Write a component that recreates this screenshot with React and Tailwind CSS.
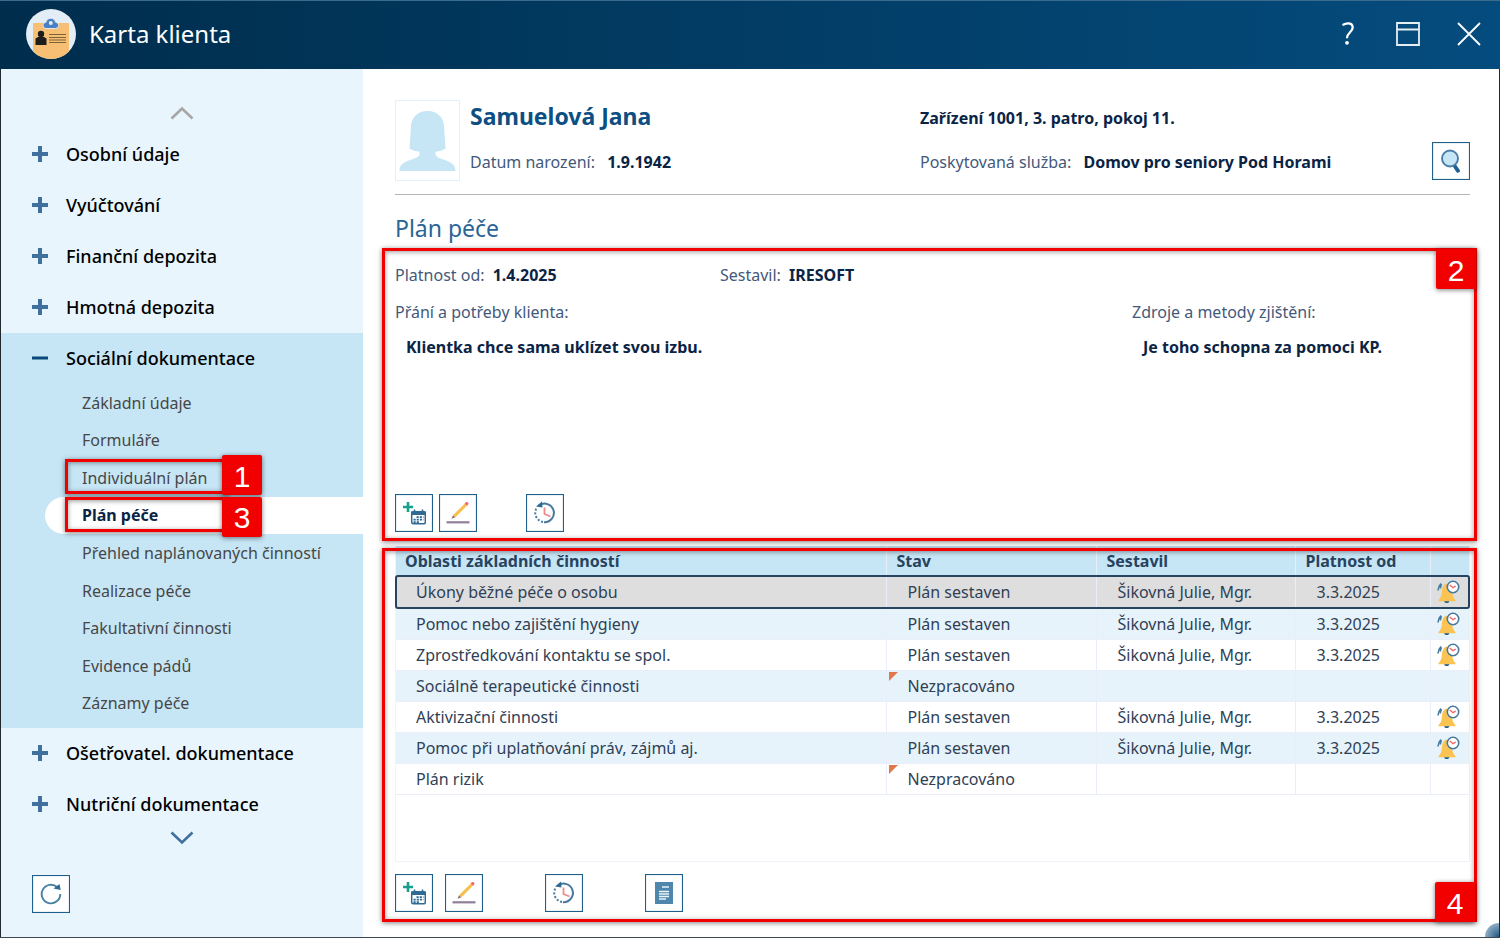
import React, { useState } from "react";
import clsx from "clsx";

const topSections = ["Osobní údaje", "Vyúčtování", "Finanční depozita", "Hmotná depozita"];
const bottomSections = ["Ošetřovatel. dokumentace", "Nutriční dokumentace"];

const socialItems = [
  { label: "Základní údaje" },
  { label: "Formuláře" },
  { label: "Individuální plán", mark: "1", markClass: "-top-1" },
  { label: "Plán péče", mark: "3", markClass: "top-0" },
  { label: "Přehled naplánovaných činností" },
  { label: "Realizace péče" },
  { label: "Fakultativní činnosti" },
  { label: "Evidence pádů" },
  { label: "Záznamy péče" },
];

const areas = [
  { name: "Úkony běžné péče o osobu", done: true },
  { name: "Pomoc nebo zajištění hygieny", done: true },
  { name: "Zprostředkování kontaktu se spol.", done: true },
  { name: "Sociálně terapeutické činnosti", done: false },
  { name: "Aktivizační činnosti", done: true },
  { name: "Pomoc při uplatňování práv, zájmů aj.", done: true },
  { name: "Plán rizik", done: false },
];

/* ---------- icons ---------- */

function ClientCardIcon() {
  return (
    <svg width="50" height="50" viewBox="0 0 50 50" aria-hidden="true">
      <defs>
        <clipPath id="cardClip">
          <circle cx="25" cy="25" r="25" />
        </clipPath>
      </defs>
      <g clipPath="url(#cardClip)">
        <rect width="50" height="50" fill="#e3edf6" />
        <rect x="7" y="14" width="36" height="38" rx="1" fill="#f6bf74" />
        <path d="M20 19.500a3 3 0 0 1-3-3c0-2 1.500-3 3-3.300.5-2.200 2.200-3.900 4.800-3.900s4.300 1.700 4.800 3.900c1.500.3 3 1.300 3 3.300a3 3 0 0 1-3 3z" fill="#4a7fc4" stroke="#dfe8f1" strokeWidth="1" />
        <circle cx="24.800" cy="14" r="2" fill="#e3edf6" />
        <circle cx="15" cy="25" r="3.200" fill="#1d1d1b" />
        <path d="M9.500 36v-6.500l2.500-1.500h6l2.500 1.500V36z" fill="#1d1d1b" />
        <path d="M23 25.500h17M23 28.500h17M23 31h17M23 33.500h17" stroke="#7d6238" strokeWidth="1" />
      </g>
    </svg>
  );
}

function Avatar() {
  return (
    <svg width="57" height="62" viewBox="0 0 57 62" aria-hidden="true">
      <path
        fill="#c6e5f5"
        d="M28.500 1C19 1 12.500 7 12 16L10.500 38.500c3 2 6 2.800 10 3.200v3.300C17 51 .500 49 .500 61h56C56.500 49 40 51 36.500 45v-3.300c4-.4 7-1.200 10-3.200L45 16C44.500 7 38 1 28.500 1z"
      />
    </svg>
  );
}

function SearchIcon() {
  return (
    <svg width="20" height="24" viewBox="0 0 20 24" aria-hidden="true">
      <path d="M13 16l4 5.800" stroke="#1f5f94" strokeWidth="3.800" strokeLinecap="round" />
      <circle cx="9" cy="9.500" r="8" fill="#c6e5f5" stroke="#4a7ca8" strokeWidth="1.900" />
    </svg>
  );
}

function RefreshIcon() {
  return (
    <svg width="22" height="22" viewBox="0 0 22 22" fill="none" aria-hidden="true">
      <path d="M20.300 11a9.300 9.300 0 1 1-3-6.800" stroke="#4a80a6" strokeWidth="1.900" />
      <path d="M13.500 5.500L19.500 1l1.200 6z" fill="#2e6a94" />
    </svg>
  );
}

function AddPlanIcon() {
  return (
    <svg width="24" height="24" viewBox="0 0 24 24" aria-hidden="true">
      <path d="M6 1v10M1 6h10" stroke="#17a08c" strokeWidth="2.600" />
      <rect x="9.700" y="10.700" width="13.600" height="12.100" rx="1.500" fill="#fff" stroke="#2e6a94" strokeWidth="1.500" />
      <path d="M9 10.500h15V14H9z" fill="#2e6a94" />
      <path d="M12.500 8.500v2.500M20.500 8.500v2.500" stroke="#2e6a94" strokeWidth="1.600" />
      <path d="M14.500 16.200h7M11.500 18.700h10M11.500 21.200h6" stroke="#2e6a94" strokeWidth="1.700" strokeDasharray="2.200 1" />
    </svg>
  );
}

function PencilIcon() {
  return (
    <svg width="24" height="24" viewBox="0 0 24 24" aria-hidden="true">
      <path d="M.5 21.300h23" stroke="#8f7f9b" strokeWidth="2.200" />
      <path d="M7 14.300L18.800 2.400l2.300 2.200L9.200 16.500z" fill="#f6bf4f" />
      <path d="M18.600 2.600l1.300-1.300c1.500-1 3.300.8 2.300 2.300l-1.300 1.200z" fill="#ee6a6d" />
      <path d="M7 14.300l2.200 2.200-3.700 1.300z" fill="#8a7078" />
    </svg>
  );
}

function HistoryIcon() {
  return (
    <svg width="24" height="24" viewBox="0 0 24 24" fill="none" aria-hidden="true">
      <path d="M6 4.500A9.300 9.300 0 1 1 11 21.200" stroke="#47799f" strokeWidth="2" />
      <path d="M10 21A9.300 9.300 0 0 1 3.300 7.500" stroke="#47799f" strokeWidth="2" strokeDasharray="2 1.800" />
      <path d="M3 5.500L9 .5l.5 6z" fill="#2e6a94" />
      <path d="M11.500 6.500V13l6 2.500" stroke="#f0888c" strokeWidth="1.800" />
    </svg>
  );
}

function ReportIcon() {
  return (
    <svg width="18" height="22" viewBox="0 0 18 22" aria-hidden="true">
      <rect width="18" height="22" fill="#4f86ab" />
      <path d="M7 5h7M4 9.500h10M4 12h10M4 14.500h10M4 17h7" stroke="#e9f4fb" strokeWidth="1.400" />
    </svg>
  );
}

function BellIcon() {
  return (
    <svg width="24" height="24" viewBox="0 0 24 24" fill="none" className="block" aria-label="Připomenutí">
      <path d="M1 10.500c.1-3 1-5 3-7M3.300 8.500c.1-1.700.5-3 1.300-4.200" stroke="#47799f" strokeWidth="1.600" />
      <path d="M7 20.500h5.500c0 3.400-5.500 3.400-5.500 0z" fill="#1f5f94" />
      <path d="M9.800 3.500C6.500 4 5.300 7.500 5 11c-.3 4.500-1.300 7.300-3.500 9v1.200h17V20c-1.800-1.500-3-4-3.300-7z" fill="#fac352" />
      <circle cx="16" cy="7" r="5.700" fill="#fff" stroke="#47799f" strokeWidth="1.600" />
      <path d="M12.800 5l3.200 2.700 2.700-1.500" stroke="#ee6a6d" strokeWidth="1.500" />
    </svg>
  );
}

function Chevron({ up }) {
  return (
    <svg width="24" height="14" viewBox="0 0 24 14" fill="none" aria-hidden="true">
      <path
        d={up ? "M1.500 12.500L12 2.500l10.500 10" : "M1.500 1.500L12 11.500l10.500-10"}
        stroke={up ? "#a6a6a6" : "#3f709e"}
        strokeWidth="2.600"
      />
    </svg>
  );
}

/* ---------- small pieces ---------- */

function IconButton({ label, className, children }) {
  return (
    <button
      type="button"
      aria-label={label}
      className={clsx(
        "flex size-[38px] shrink-0 items-center justify-center border border-[#1f5f8c] bg-white shadow-[inset_0_0_1px_#3d7499] hover:bg-[#e9f5fc]",
        className
      )}
    >
      {children}
    </button>
  );
}

function Badge({ className, children }) {
  return (
    <span
      className={clsx(
        "absolute z-20 flex size-10 items-center justify-center rounded-xs bg-[#f20000] pt-[2px] font-['Liberation_Sans',sans-serif] text-[30px] font-normal text-white shadow-[0_1px_5px_rgba(0,0,0,0.5)]",
        className
      )}
    >
      {children}
    </span>
  );
}

function Frame({ className }) {
  return (
    <span
      className={clsx(
        "pointer-events-none absolute z-10 border-3 border-[#f20000] shadow-[0_1px_5px_rgba(0,0,0,0.5),inset_0_1px_5px_rgba(0,0,0,0.4)]",
        className
      )}
    />
  );
}

function SectionButton({ label, open }) {
  return (
    <button type="button" aria-expanded={!!open} className="flex h-[51px] w-full items-center gap-[18px] pb-[2px] pl-[31px] text-left text-lg font-medium text-black">
      <svg width="16" height="16" viewBox="0 0 16 16" aria-hidden="true">
        <path d={open ? "M0 8h16" : "M0 8h16M8 0v16"} stroke={open ? "#0a4a7a" : "#3f709e"} strokeWidth={open ? 3 : 4} />
      </svg>
      {label}
    </button>
  );
}

function Field({ label, value, wide }) {
  return (
    <p className="whitespace-nowrap">
      {label} <strong className={clsx("font-bold text-[#0b2445]", wide ? "ml-2" : "ml-1")}>{value}</strong>
    </p>
  );
}

export default function App() {
  const [active, setActive] = useState("Plán péče");
  const [selected, setSelected] = useState(0);

  return (
    <div className="flex min-h-screen flex-col border-b border-[#3f4750] bg-white font-['Noto_Sans',sans-serif] text-base text-[#44597a]">
      <header className="flex h-[69px] shrink-0 items-center border-t border-[#3a6a8c] bg-linear-to-r from-[#002d4c] to-[#054c7e] pb-[2px] pl-[26px] pr-[18px] text-white">
        <ClientCardIcon />
        <h1 className="ml-[13px] text-2xl">Karta klienta</h1>
        <div className="ml-auto flex items-center gap-9">
          <button type="button" aria-label="Nápověda" className="w-[14px]">
            <svg width="14" height="24" viewBox="0 0 14 24" fill="none" aria-hidden="true">
              <path d="M.5 3C2.500 1.800 4.500 1.300 6 1.300c3 0 4.700 1.700 4.700 4.200 0 4.700-5.700 5-5.700 10.700" stroke="#fff" strokeWidth="2.300" />
              <circle cx="5" cy="20.800" r="1.900" fill="#fff" />
            </svg>
          </button>
          <button type="button" aria-label="Maximalizovat" className="ml-1">
            <svg width="24" height="24" viewBox="0 0 24 24" fill="none" aria-hidden="true">
              <path d="M1 1h22v22H1zM1 7.500h22" stroke="#e6eef4" strokeWidth="1.800" />
            </svg>
          </button>
          <button type="button" aria-label="Zavřít">
            <svg width="26" height="26" viewBox="0 0 26 26" fill="none" aria-hidden="true">
              <path d="M2 2l22 22M24 2L2 24" stroke="#fff" strokeWidth="1.800" />
            </svg>
          </button>
        </div>
      </header>

      <div className="flex flex-1 border-x border-[#22282e]">
        <nav className="flex w-[362px] shrink-0 flex-col bg-[#e9f5fc]">
          <button type="button" aria-label="Nahoru" className="flex h-15 items-center justify-center pt-7">
            <Chevron up />
          </button>
          {topSections.map((s) => (
            <SectionButton key={s} label={s} />
          ))}
          <div className="bg-[#c6e5f5] pb-[6px]">
            <SectionButton label="Sociální dokumentace" open />
            <ul className="grid h-[338px] grid-rows-9">
              {socialItems.map((item) => (
                <li key={item.label} className="relative flex">
                  <a
                    href="#"
                    onClick={() => setActive(item.label)}
                    className={clsx(
                      "ml-11 flex flex-1 items-center rounded-l-full pl-[37px]",
                      active === item.label ? "bg-white font-bold text-[#0b2445]" : "text-[#474747]"
                    )}
                  >
                    {item.label}
                  </a>
                  {item.mark && (
                    <>
                      <Frame className="left-16 top-0 h-[35px] w-[164px]" />
                      <Badge className={clsx("left-[221px]", item.markClass)}>{item.mark}</Badge>
                    </>
                  )}
                </li>
              ))}
            </ul>
          </div>
          {bottomSections.map((s) => (
            <SectionButton key={s} label={s} />
          ))}
          <button type="button" aria-label="Dolů" className="flex h-4 items-center justify-center">
            <Chevron />
          </button>
          <IconButton label="Obnovit" className="mb-6 ml-[31px] mt-auto">
            <RefreshIcon />
          </IconButton>
        </nav>

        <main className="flex min-w-0 flex-1 flex-col pl-8 pr-[29px] pt-[31px]">
          <section className="flex border-b border-[#b5b5b5] pb-[13px]">
            <div className="flex h-[81px] w-[65px] shrink-0 items-center justify-center border border-[#e0f1fa]">
              <Avatar />
            </div>
            <div className="flex flex-1 justify-between pl-[10px]">
              <div className="w-[450px]">
                <h2 className="text-[23px] leading-8 font-bold text-[#0d4f82]">Samuelová Jana</h2>
                <div className="mt-[18px]">
                  <Field label="Datum narození:" value="1.9.1942" wide />
                </div>
              </div>
              <div className="flex-1 pt-[6px]">
                <p className="font-bold text-[#0b2445]">Zařízení 1001, 3. patro, pokoj 11.</p>
                <div className="mt-5">
                  <Field label="Poskytovaná služba:" value="Domov pro seniory Pod Horami" wide />
                </div>
              </div>
              <IconButton label="Hledat klienta" className="mt-[42px]">
                <SearchIcon />
              </IconButton>
            </div>
          </section>

          <h3 className="mb-1 mt-[17px] text-[23px] leading-8 text-[#2a6595]">Plán péče</h3>

          <section className="relative pb-[9px] pt-4">
            <div className="flex h-[22px] items-center">
              <div className="w-[325px]">
                <Field label="Platnost od:" value="1.4.2025" />
              </div>
              <Field label="Sestavil:" value="IRESOFT" />
            </div>
            <div className="mt-[14px] flex h-[182px] justify-between">
              <div>
                <h4>Přání a potřeby klienta:</h4>
                <p className="mt-[11px] pl-[11px] font-bold text-[#0b2445]">Klientka chce sama uklízet svou izbu.</p>
              </div>
              <div className="w-[338px]">
                <h4>Zdroje a metody zjištění:</h4>
                <p className="mt-[11px] pl-[11px] font-bold text-[#0b2445]">Je toho schopna za pomoci KP.</p>
              </div>
            </div>
            <div className="mt-3 flex gap-[6px]">
              <IconButton label="Přidat plán">
                <AddPlanIcon />
              </IconButton>
              <IconButton label="Upravit plán">
                <PencilIcon />
              </IconButton>
              <IconButton label="Historie" className="ml-[43px]">
                <HistoryIcon />
              </IconButton>
            </div>
            <Frame className="-left-[13px] -right-[7px] bottom-0 top-0" />
            <Badge className="-right-[6px] top-px">2</Badge>
          </section>

          <section className="relative mb-[15px] mt-[5px] flex flex-1 flex-col pb-[10px]">
            <div className="min-h-[300px] flex-1 border border-t-0 border-[#eef2fb]">
              <table className="w-full table-fixed border-collapse text-left text-[#2f4156]">
                <colgroup>
                  <col />
                  <col className="w-[210px]" />
                  <col className="w-[199px]" />
                  <col className="w-[135px]" />
                  <col className="w-[39px]" />
                </colgroup>
                <thead className="bg-[#c6e5f5] text-[#26435f]">
                  <tr className="h-[30px]">
                    <th className="pl-[9px] font-bold">Oblasti základních činností</th>
                    <th className="border-l border-[#e9eefa] pl-[10px] font-bold">Stav</th>
                    <th className="border-l border-[#e9eefa] pl-[10px] font-bold">Sestavil</th>
                    <th className="border-l border-[#e9eefa] pl-[10px] font-bold">Platnost od</th>
                    <th className="border-l border-[#e9eefa]" aria-label="Připomenutí"></th>
                  </tr>
                </thead>
                <tbody>
                  {areas.map((area, i) => (
                    <tr
                      key={area.name}
                      onClick={() => setSelected(i)}
                      className={clsx(
                        "border-b border-[#e9eefa]",
                        i === selected
                          ? "h-8 rounded-xs bg-[#dedede] outline-2 -outline-offset-1 outline-[#26435f]"
                          : i % 2 ? "h-[31px] bg-[#e6f3fb]" : "h-[31px] bg-white"
                      )}
                    >
                      <td className="pl-5">{area.name}</td>
                      <td className="relative border-l border-[#e9eefa] pl-[21px]">
                        {!area.done && (
                          <svg width="9" height="9" viewBox="0 0 9 9" className="absolute left-[2px] top-px" aria-hidden="true">
                            <path d="M0 0h9L0 9z" fill="#e0784a" />
                          </svg>
                        )}
                        {area.done ? "Plán sestaven" : "Nezpracováno"}
                      </td>
                      <td className="border-l border-[#e9eefa] pl-[21px]">{area.done && "Šikovná Julie, Mgr."}</td>
                      <td className="border-l border-[#e9eefa] pl-[21px]">{area.done && "3.3.2025"}</td>
                      <td className="border-l border-[#e9eefa] pl-[6px]">{area.done && <BellIcon />}</td>
                    </tr>
                  ))}
                </tbody>
              </table>
            </div>
            <div className="mt-3 flex gap-3">
              <IconButton label="Přidat oblast">
                <AddPlanIcon />
              </IconButton>
              <IconButton label="Upravit oblast">
                <PencilIcon />
              </IconButton>
              <IconButton label="Historie" className="ml-[50px]">
                <HistoryIcon />
              </IconButton>
              <IconButton label="Sestava" className="ml-[50px]">
                <ReportIcon />
              </IconButton>
            </div>
            <Frame className="-left-[13px] -right-[7px] bottom-0 top-[2px]" />
            <Badge className="-right-[5px] bottom-0">4</Badge>
          </section>
        </main>
      </div>

      {/* resize grip */}
      <span className="fixed bottom-px right-px size-[14px] rounded-tl-full bg-radial-[at_100%_100%] from-[#1d5482] to-[#bfd3e3]" />
    </div>
  );
}
